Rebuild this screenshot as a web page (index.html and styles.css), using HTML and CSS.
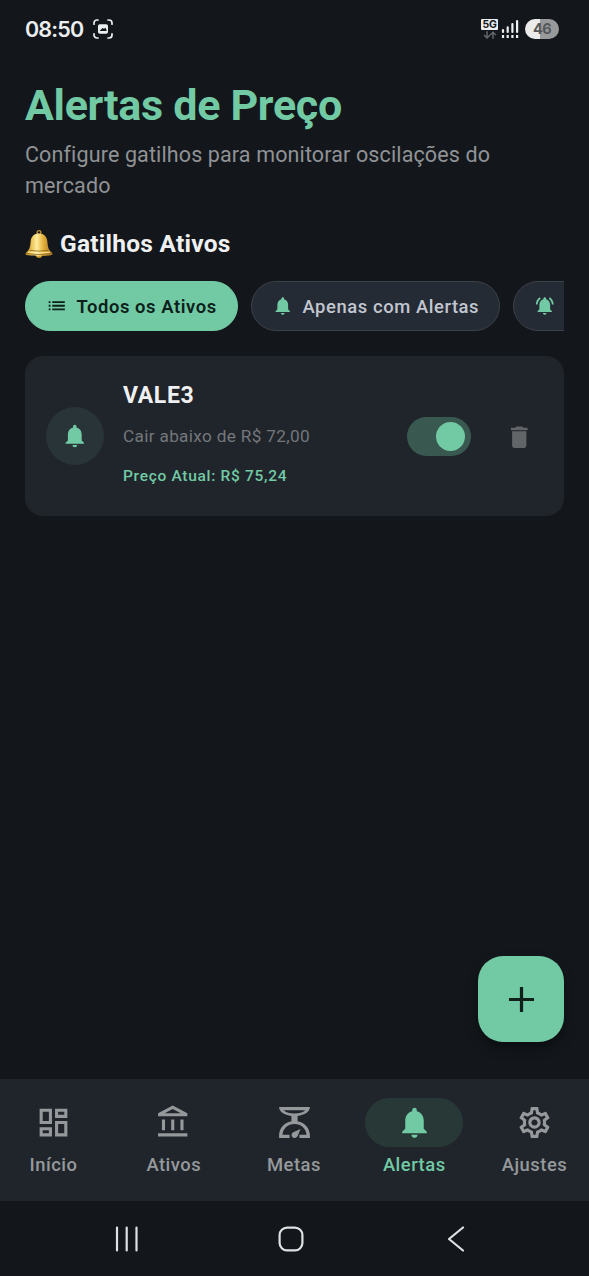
FILE: index.html
```html
<!DOCTYPE html>
<html lang="pt-BR">
<head>
<meta charset="utf-8">
<title>Alertas de Preço</title>
<link rel="stylesheet" href="styles.css">
</head>
<body>
<svg width="0" height="0" class="defs">
  <defs>
    <symbol id="bell" viewBox="0 0 24 24"><path d="M12 22c1.1 0 2-.9 2-2h-4c0 1.1.89 2 2 2zm6-6v-5c0-3.07-1.64-5.64-4.5-6.32V4c0-.83-.67-1.5-1.5-1.5s-1.5.67-1.5 1.5v.68C7.63 5.36 6 7.92 6 11v5l-2 2v1h16v-1l-2-2z"/></symbol>
  </defs>
</svg>
<div class="screen">
  <header class="status">
    <span class="clock">08:50</span>
    <svg class="capture" viewBox="0 0 20 20" fill="none" stroke="currentColor" stroke-width="1.7" stroke-linecap="round"><path d="M1 5.2V4a3 3 0 0 1 3-3h1M15 1h1a3 3 0 0 1 3 3v1.2M19 14.8V16a3 3 0 0 1-3 3h-1M5 19H4a3 3 0 0 1-3-3v-1.2"/><path fill="currentColor" stroke="none" fill-rule="evenodd" d="M6.8 5.2h6.4q1.8 0 1.8 1.8v6q0 1.8-1.8 1.8H6.8Q5 14.800 5 13V7q0-1.800 1.800-1.800zM6.500 12h7.200l-1-3.200-1.700 1-1.500-.8z"/></svg>
    <span class="spacer"></span>
    <div class="network">
      <span class="tech">5G</span>
      <svg viewBox="0 0 14 8" width="14" height="8" fill="none" stroke="#63676a" stroke-width="1.500"><path d="M4 .2v6.500M1 4l3 3 3-3M10 7.800V1.300M7.200 4L10 1.200 13 4"/></svg>
    </div>
    <svg class="signal" viewBox="0 0 18 20" stroke="#eceef0" stroke-width="2.200" stroke-linecap="round"><path d="M2 11v2M6.700 8.300V13M11.400 5V13M16.100 2V13"/><path stroke-linecap="butt" d="M.9 17.500h2.200M5.600 17.500h2.200M10.300 17.500h2.200M15 17.500h2.200" stroke-width="2.800"/></svg>
    <span class="battery">46</span>
  </header>

  <main class="content">
    <h1>Alertas de Preço</h1>
    <p class="subtitle">Configure gatilhos para monitorar oscilações do mercado</p>
    <h2>
      <svg class="emoji" viewBox="0 0 28 28">
        <defs>
          <linearGradient id="gold" x1="0" x2="1"><stop offset="0" stop-color="#b9892b"/><stop offset=".2" stop-color="#e8bd4b"/><stop offset=".42" stop-color="#ffec9e"/><stop offset=".65" stop-color="#e4b23d"/><stop offset="1" stop-color="#a8731c"/></linearGradient>
        </defs>
        <circle cx="14" cy="2.600" r="1.900" fill="none" stroke="#c79532" stroke-width="1.300"/>
        <ellipse cx="14" cy="25.500" rx="3" ry="2.300" fill="#d8a32f"/>
        <path fill="url(#gold)" d="M14 3.500c-5.200 0-8 3.200-8.400 8.200-.4 5.600-1.200 8-4 10.300C.2 23.200.200 24.200 1 24.800c2 1.500 24 1.500 26 0 .8-.6.8-1.600-.6-2.800-2.800-2.300-3.600-4.700-4-10.300-.4-5-3.200-8.200-8.400-8.200z"/>
        <path fill="none" stroke="#91651c" stroke-width=".8" d="M4.500 20.300q9.500 1.700 19 0M1.300 23.600q12.700 2.100 25.400 0"/>
        <path stroke="#fff4bd" stroke-width=".8" fill="none" d="M3 22.200q11 1.800 22 0"/>
      </svg>
      <span>Gatilhos Ativos</span>
    </h2>
    <div class="chips">
      <div class="chip selected"><svg class="icon" viewBox="0 0 24 24"><path d="M3 13h2v-2H3v2zm0 4h2v-2H3v2zm0-8h2V7H3v2zm4 4h14v-2H7v2zm0 4h14v-2H7v2zM7 7v2h14V7H7z"/></svg><span>Todos os Ativos</span></div>
      <div class="chip with-alerts"><svg class="icon"><use href="#bell"/></svg><span>Apenas com Alertas</span></div>
      <div class="chip triggered"><svg class="icon" viewBox="0 0 24 24"><path d="M7.580 4.080L6.150 2.650C3.750 4.480 2.170 7.300 2.030 10.500h2c.15-2.650 1.510-4.970 3.550-6.420zm12.390 6.420h2c-.15-3.200-1.730-6.020-4.120-7.850l-1.420 1.430c2.020 1.450 3.390 3.770 3.540 6.420zM18 11c0-3.070-1.640-5.640-4.500-6.320V4c0-.83-.67-1.500-1.500-1.500s-1.500.67-1.500 1.500v.68C7.630 5.360 6 7.920 6 11v5l-2 2v1h16v-1l-2-2v-5zm-6 11c.14 0 .27-.01.4-.04.65-.14 1.180-.58 1.440-1.180.1-.24.15-.5.15-.78h-4c.01 1.100.9 2 2.010 2z"/></svg></div>
    </div>
    <section class="card">
      <div class="avatar"><svg><use href="#bell"/></svg></div>
      <div class="info">
        <strong class="ticker">VALE3</strong>
        <span class="condition">Cair abaixo de R$ 72,00</span>
        <span class="price">Preço Atual: R$ 75,24</span>
      </div>
      <div class="toggle"><span class="thumb"></span></div>
      <svg class="trash" viewBox="0 0 24 24"><path d="M6 19c0 1.100.9 2 2 2h8c1.100 0 2-.9 2-2V7H6v12zM19 4h-3.500l-1-1h-5l-1 1H5v2h14V4z"/></svg>
    </section>
    <div class="fab"><svg viewBox="0 0 24 24"><path d="M19 12.900h-6.100V19h-1.800v-6.100H5v-1.800h6.100V5h1.800v6.100H19z"/></svg></div>
  </main>

  <nav class="tabs">
    <div class="tab"><span class="pill"><svg viewBox="0 0 24 24"><path d="M19 5v2h-4V5h4M9 5v6H5V5h4m10 8v6h-4v-6h4M9 17v2H5v-2h4M21 3h-8v6h8V3zM11 3H3v10h8V3zm10 8h-8v10h8V11zm-10 4H3v6h8v-6z"/></svg></span><span>Início</span></div>
    <div class="tab"><span class="pill"><svg viewBox="0 0 24 24"><path d="M6.500 10h-2v7h2v-7zm6 0h-2v7h2v-7zm8.500 9H2v2h19v-2zm-2.500-9h-2v7h2v-7zm-7-6.740L16.710 6H6.290l5.210-2.740m0-2.260L2 6v2h19V6l-9.500-5z"/></svg></span><span>Ativos</span></div>
    <div class="tab"><span class="pill"><svg viewBox="0 0 24 24"><path fill-rule="evenodd" d="M2 2h20c0 3-3.500 5.300-8 5.800V11.200c4.800.9 8 4.700 8 9.300V22h-6.800v-2h4.600c-.3-4.200-3.500-7.100-7.800-7.100S4.500 15.800 4.200 20h4.600v2H2v-1.500c0-4.600 3.200-8.400 8-9.300V7.800C5.500 7.300 2 5 2 2zM5 4c1.400 1.400 4 2.100 7 2.100s5.600-.7 7-2.100z"/><path d="M15.900 16.200l-1.700 4.300c-.5 1.300-1.500 1.700-2.500 1.500-1.400-.2-2-1.600-1.400-2.700.2-.4.500-.7.900-.9z"/></svg></span><span>Metas</span></div>
    <div class="tab active"><span class="pill"><svg><use href="#bell"/></svg></span><span>Alertas</span></div>
    <div class="tab"><span class="pill"><svg viewBox="0 0 24 24"><path d="M19.430 12.980c.04-.32.07-.64.07-.98s-.03-.66-.07-.98l2.110-1.650c.19-.15.24-.42.12-.64l-2-3.460a.5.5 0 0 0-.61-.22l-2.490 1c-.52-.4-1.080-.73-1.690-.98l-.38-2.650A.488.488 0 0 0 14 2h-4c-.25 0-.46.18-.49.42l-.38 2.650c-.61.25-1.170.59-1.690.98l-2.490-1a.566.566 0 0 0-.18-.03c-.17 0-.34.09-.43.25l-2 3.460c-.13.22-.07.49.12.64l2.110 1.650c-.04.32-.07.65-.07.98s.03.66.07.98l-2.110 1.650c-.19.15-.24.42-.12.64l2 3.460a.5.5 0 0 0 .61.22l2.490-1c.52.4 1.080.73 1.690.98l.38 2.650c.03.24.24.42.49.42h4c.25 0 .46-.18.49-.42l.38-2.650c.61-.25 1.170-.59 1.690-.98l2.490 1c.06.02.12.03.18.03.17 0 .34-.09.43-.25l2-3.460c.12-.22.07-.49-.12-.64l-2.110-1.650zm-1.980-1.710c.04.31.05.52.05.73s-.02.43-.05.73l-.14 1.130.89.7 1.080.84-.7 1.210-1.270-.51-1.040-.42-.9.68c-.43.32-.84.56-1.250.73l-1.060.43-.16 1.130-.2 1.350h-1.400l-.19-1.350-.16-1.130-1.060-.43c-.43-.18-.83-.41-1.230-.71l-.91-.7-1.060.43-1.270.51-.7-1.210 1.080-.84.89-.7-.14-1.130c-.03-.31-.05-.54-.05-.74s.02-.43.05-.73l.14-1.130-.89-.7-1.080-.84.7-1.210 1.270.51 1.040.42.9-.68c.43-.32.84-.56 1.250-.73l1.060-.43.16-1.130.2-1.350h1.390l.19 1.350.16 1.130 1.060.43c.43.18.83.41 1.230.71l.91.7 1.060-.43 1.270-.51.7 1.210-1.070.85-.89.7.14 1.130zM12 8c-2.210 0-4 1.790-4 4s1.790 4 4 4 4-1.790 4-4-1.790-4-4-4zm0 6c-1.100 0-2-.9-2-2s.9-2 2-2 2 .9 2 2-.9 2-2 2z"/></svg></span><span>Ajustes</span></div>
  </nav>

  <footer class="system">
    <svg width="24" height="26" viewBox="0 0 24 26"><path d="M2 1.500v23M11.700 1.500v23M21.500 1.500v23"/></svg>
    <svg width="26" height="26" viewBox="0 0 26 26"><rect x="1.600" y="1.600" width="22.800" height="22.800" rx="7.500"/></svg>
    <svg class="back" width="18" height="26" viewBox="0 0 18 26"><path d="M16 1.500L2 13l14 11.500"/></svg>
  </footer>
</div>
</body>
</html>
```
FILE: styles.css
```css
* { box-sizing: border-box; }
body { margin: 0; background: #13171b; font-family: Roboto, "Noto Sans", sans-serif; }
svg { display: block; flex: none; fill: currentColor; }
.defs { position: absolute; }
.screen { width: 589px; height: 1276px; display: flex; flex-direction: column; overflow: hidden; }

.status { height: 58px; flex: none; padding: 0 30px 0 25px; display: flex; align-items: center; color: #eceef0; }
.clock { width: 58px; font: 600 21.500px/30px Inter, sans-serif; letter-spacing: -.85px; white-space: nowrap; }
.status .capture { width: 20px; height: 20px; margin-left: 10px; fill: none; }
.spacer { flex: 1; }
.network { display: flex; flex-direction: column; align-items: center; gap: 1px; }
.network svg { fill: none; }
.tech { width: 17px; height: 11px; border-radius: 1px; background: #eceef0; color: #13171b; font: 700 10.500px/11px Inter, sans-serif; text-align: center; letter-spacing: -.3px; }
.signal { width: 18px; height: 20px; margin-left: 3px; }
.battery { width: 34px; height: 20px; margin-left: 6px; border-radius: 10px; background: linear-gradient(90deg, #ebebeb 45%, #98999b 45%); color: #55585b; font: 700 14.500px/20px Inter, sans-serif; letter-spacing: -.5px; text-align: center; }

.content { flex: 1; padding: 23px 25px 37px; display: flex; flex-direction: column; }
h1 { margin: 0; font-size: 43px; font-weight: 700; line-height: 49px; letter-spacing: -.3px; color: #72caa5; white-space: nowrap; }
.subtitle { margin: 9px 0 0; font-size: 21.500px; line-height: 31px; letter-spacing: .13px; color: #909296; }
h2 { margin: 27px 0 0; height: 32px; display: flex; align-items: center; gap: 7px; font-size: 24.500px; line-height: 32px; font-weight: 700; letter-spacing: .24px; color: #eff0f2; }
.emoji { width: 28px; height: 28px; }
.chips { margin-top: 21px; display: flex; gap: 13px; overflow: hidden; flex: none; }
.chip { flex: none; height: 50px; display: flex; align-items: center; gap: 9px; padding-left: 20px; border: 1.500px solid #3c4049; border-radius: 25px; background: #252b34; color: #c2c6d0; font-size: 18.400px; font-weight: 500; letter-spacing: .58px; white-space: nowrap; }
.icon { width: 21.500px; height: 21.500px; }
.chip .icon { color: #72caa5; }
.selected { width: 213px; border-color: #72caa5; background: #72caa5; color: #0c211a; font-weight: 600; }
.selected .icon { color: #0c211a; }
.with-alerts { width: 249px; }
.triggered { width: 220px; }

.card { height: 160px; margin-top: 25px; flex: none; display: flex; align-items: center; padding: 0 31px 0 21px; border-radius: 18px; background: #20252b; }
.avatar { width: 58px; height: 58px; border-radius: 50%; display: grid; place-items: center; background: #283437; color: #72caa5; }
.avatar svg { width: 27.600px; height: 27.600px; }
.info { margin: 0 0 2px 19px; flex: 1; display: flex; flex-direction: column; white-space: nowrap; }
.ticker { font-size: 23px; line-height: 34px; letter-spacing: .6px; color: #eff0f2; }
.condition { margin-top: 8px; font-size: 17.200px; line-height: 30px; letter-spacing: .33px; color: #74777b; }
.price { margin-top: 10px; font-size: 15.500px; line-height: 30px; font-weight: 500; letter-spacing: .7px; color: #72caa5; }
.toggle { width: 64px; height: 39px; padding: 5px 5.500px; display: flex; justify-content: flex-end; border-radius: 20px; background: #395950; }
.thumb { width: 29px; height: 29px; border-radius: 50%; background: #72caa5; }
.trash { width: 28.500px; height: 28.500px; margin: 2px 0 0 34px; color: #626568; }
.fab { width: 86px; height: 86px; margin: auto 0 0 auto; flex: none; display: grid; place-items: center; border-radius: 25px; background: #72caa5; color: #10211c; box-shadow: 0 6px 12px rgba(0, 0, 0, .4); }
.fab svg { width: 43px; height: 43px; }

.tabs { height: 122px; flex: none; display: grid; grid-template-columns: repeat(5, 107px); gap: 13.250px; background: #20252b; color: #96999c; }
.tab { padding-top: 19px; display: flex; flex-direction: column; align-items: center; gap: 6px; font-size: 18.400px; line-height: 24px; font-weight: 500; letter-spacing: .5px; }
.tab.active { color: #72caa5; }
.pill { width: 98px; height: 49px; display: grid; place-items: center; border-radius: 25px; }
.pill svg { width: 37px; height: 37px; }
.active .pill { background: #283837; }
.system { height: 75px; flex: none; padding: 0 0 0 115px; display: flex; align-items: center; gap: 139px; }
.system .back { margin-left: 4px; }
.system svg { fill: none; stroke: #dfe1e3; stroke-width: 2.200; stroke-linecap: round; stroke-linejoin: round; }
```
